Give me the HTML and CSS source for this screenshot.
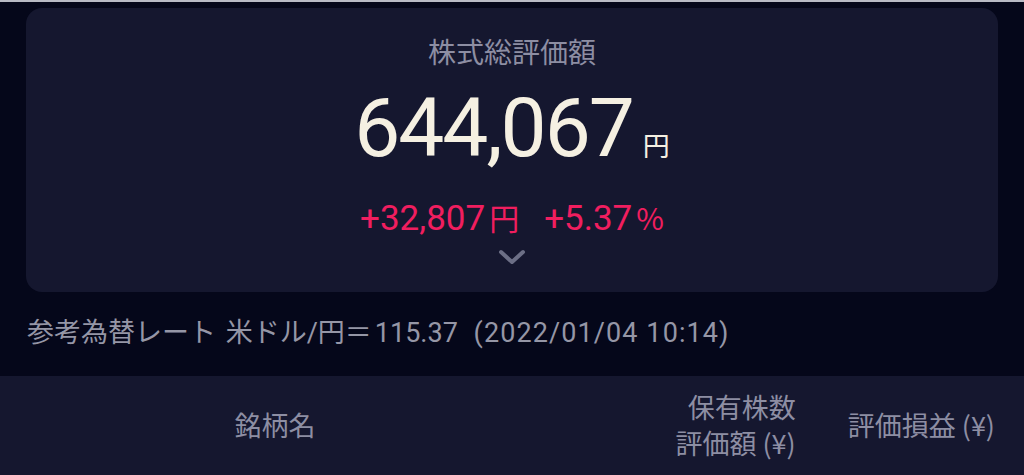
FILE: index.html
```html
<!DOCTYPE html>
<html lang="ja">
<head>
<meta charset="utf-8">
<link rel="stylesheet" href="styles.css">
</head>
<body>
<div class="topline"></div>
<section class="card">
  <div class="title">株式総評価額</div>
  <div class="total"><span class="num">644,067</span><span class="yen">円</span></div>
  <div class="change"><span class="num">+32,807</span><span class="unit">円</span><span class="pct">+5.37<span class="unit">%</span></span></div>
  <svg class="chev" width="28" height="16" viewBox="0 0 28 16"><polyline points="3,3 14,13 25,3" fill="none" stroke="#6c6f86" stroke-width="4" stroke-linecap="round" stroke-linejoin="round"/></svg>
</section>
<div class="rate">参考為替レート 米ドル/円＝<span class="val">115.37</span> <span class="ts">(2022/01/04 10:14)</span></div>
<div class="thead">
  <div class="col name">銘柄名</div>
  <div class="col qty"><div>保有株数</div><div>評価額 (¥)</div></div>
  <div class="col pl">評価損益 (¥)</div>
</div>
</body>
</html>
```
FILE: styles.css
```css
html, body {
  margin: 0;
  padding: 0;
  background: #05071a;
  font-family: "Roboto", "Noto Sans CJK JP", sans-serif;
  overflow: hidden;
}
.topline {
  height: 2px;
  background: #b9bac4;
}
.card {
  margin: 6px 26px 0;
  height: 284px;
  box-sizing: border-box;
  background: #15172f;
  border-radius: 16px;
  display: flex;
  flex-direction: column;
  align-items: center;
  padding-top: 25px;
}
.title {
  font-family: "Noto Sans CJK JP", sans-serif;
  font-size: 28px;
  line-height: 36px;
  color: #8d8ea3;
}
.total {
  margin-top: 14px;
  height: 90px;
  line-height: 90px;
  color: #f5f0e2;
  display: flex;
  align-items: baseline;
  padding-left: 0;
}
.total .num {
  font-size: 82px;
  letter-spacing: -2px;
}
.total .yen {
  font-family: "Noto Sans CJK JP", sans-serif;
  font-size: 27px;
  margin-left: 10px;
}
.change {
  margin-top: 24px;
  height: 40px;
  line-height: 40px;
  color: #f01e5f;
  font-size: 35px;
  display: flex;
  align-items: baseline;
}
.change .unit {
  font-family: "Noto Sans CJK JP", sans-serif;
  font-size: 30px;
  margin-left: 4px;
}
.change .pct {
  margin-left: 25px;
}
.chev {
  margin-top: 12px;
  display: block;
}
.rate {
  margin-top: 23px;
  padding-left: 27px;
  font-family: "Roboto", "Noto Sans CJK JP", sans-serif;
  font-size: 27px;
  line-height: 36px;
  color: #9596a6;
  word-spacing: 3px;
  white-space: nowrap;
}
.rate .val {
  margin-left: 3px;
}
.rate .ts {
  margin-left: 6px;
  letter-spacing: 1.1px;
  word-spacing: 0;
}
.thead {
  margin-top: 25px;
  background: #15172f;
  height: 120px;
  box-sizing: border-box;
  padding: 13px 29px 0 0;
  display: grid;
  grid-template-columns: 550px 1fr auto;
  column-gap: 52px;
  align-content: start;
  align-items: center;
  font-family: "Noto Sans CJK JP", sans-serif;
  font-size: 27px;
  line-height: 36px;
  color: #8d8ea3;
}
.name { text-align: center; }
.qty { text-align: right; }
.pl { text-align: right; }
```
